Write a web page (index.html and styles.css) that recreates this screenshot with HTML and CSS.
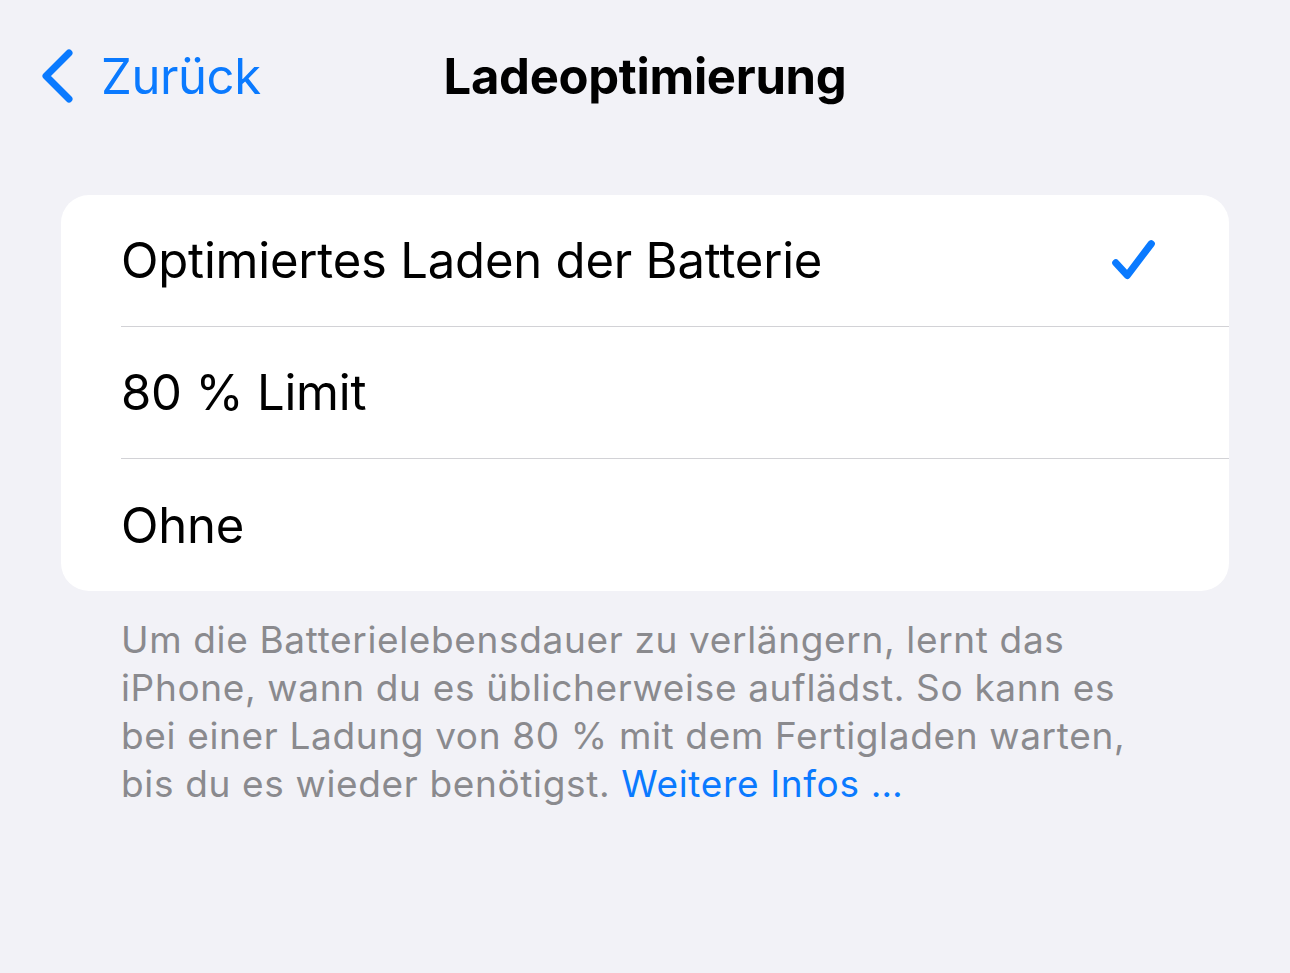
FILE: index.html
```html
<!DOCTYPE html>
<html lang="de">
<head>
  <meta charset="UTF-8" />
  <meta name="viewport" content="width=device-width, initial-scale=1" />
  <title>Ladeoptimierung</title>
  <link rel="stylesheet" href="styles.css">
</head>
<body>
  <header class="nav">
    <a class="back" href="#">
      <svg class="chevron" viewBox="0 0 34 56" aria-hidden="true">
        <path d="M29 5 L6 28 L29 51" fill="none" stroke="currentColor" stroke-width="7" stroke-linecap="round" stroke-linejoin="round"/>
      </svg>
      <span>Zurück</span>
    </a>
    <h1 class="title">Ladeoptimierung</h1>
    <div></div>
  </header>

  <main class="content">
    <ul class="group">
      <li class="row">
        <span>Optimiertes Laden der Batterie</span>
        <svg class="check" viewBox="0 0 48 48" aria-hidden="true">
          <path d="M5 26 L17 39 L42 6" fill="none" stroke="currentColor" stroke-width="7.5" stroke-linecap="round" stroke-linejoin="round"/>
        </svg>
      </li>
      <li class="row"><span>80 % Limit</span></li>
      <li class="row"><span>Ohne</span></li>
    </ul>
    <p class="footer">
      Um die Batterielebensdauer zu verlängern, lernt das<br>
      iPhone, wann du es üblicherweise auflädst. So kann es<br>
      bei einer Ladung von 80 % mit dem Fertigladen warten,<br>
      bis du es wieder benötigst. <a href="#">Weitere Infos …</a>
    </p>
  </main>
</body>
</html>
```

FILE: styles.css
```css
body, html {
  margin: 0;
  padding: 0;
  background: #f2f2f7;
  font-family: Inter, 'Noto Sans', sans-serif;
  color: #000;
}

.nav {
  display: grid;
  grid-template-columns: 1fr auto 1fr;
  align-items: center;
  height: 152px;
  padding: 0 40px;
}

.back {
  display: flex;
  align-items: center;
  gap: 27px;
  color: #0a7aff;
  text-decoration: none;
  font-size: 49px;
  letter-spacing: -0.4px;
}

.chevron {
  width: 34px;
  height: 56px;
}

.title {
  margin: 0;
  font-size: 49px;
  font-weight: 700;
  letter-spacing: -0.3px;
}

.content {
  padding: 43px 61px 0;
}

.group {
  list-style: none;
  margin: 0;
  padding: 0;
  background: #fff;
  border-radius: 28px;
  overflow: hidden;
}

.row {
  box-sizing: border-box;
  display: flex;
  align-items: center;
  justify-content: space-between;
  height: 132px;
  margin-left: 60px;
  padding-right: 72px;
  font-size: 49px;
  letter-spacing: -0.2px;
  border-bottom: 1px solid #d2d2d6;
}

.row:last-child {
  border-bottom: none;
}

.check {
  width: 46px;
  height: 46px;
  color: #0a7aff;
}

.footer {
  margin: 25px 0 0 60px;
  font-size: 37px;
  line-height: 48px;
  color: #8a8a8e;
  letter-spacing: 0.65px;
}

.footer a {
  color: #0a7aff;
  text-decoration: none;
}
```
